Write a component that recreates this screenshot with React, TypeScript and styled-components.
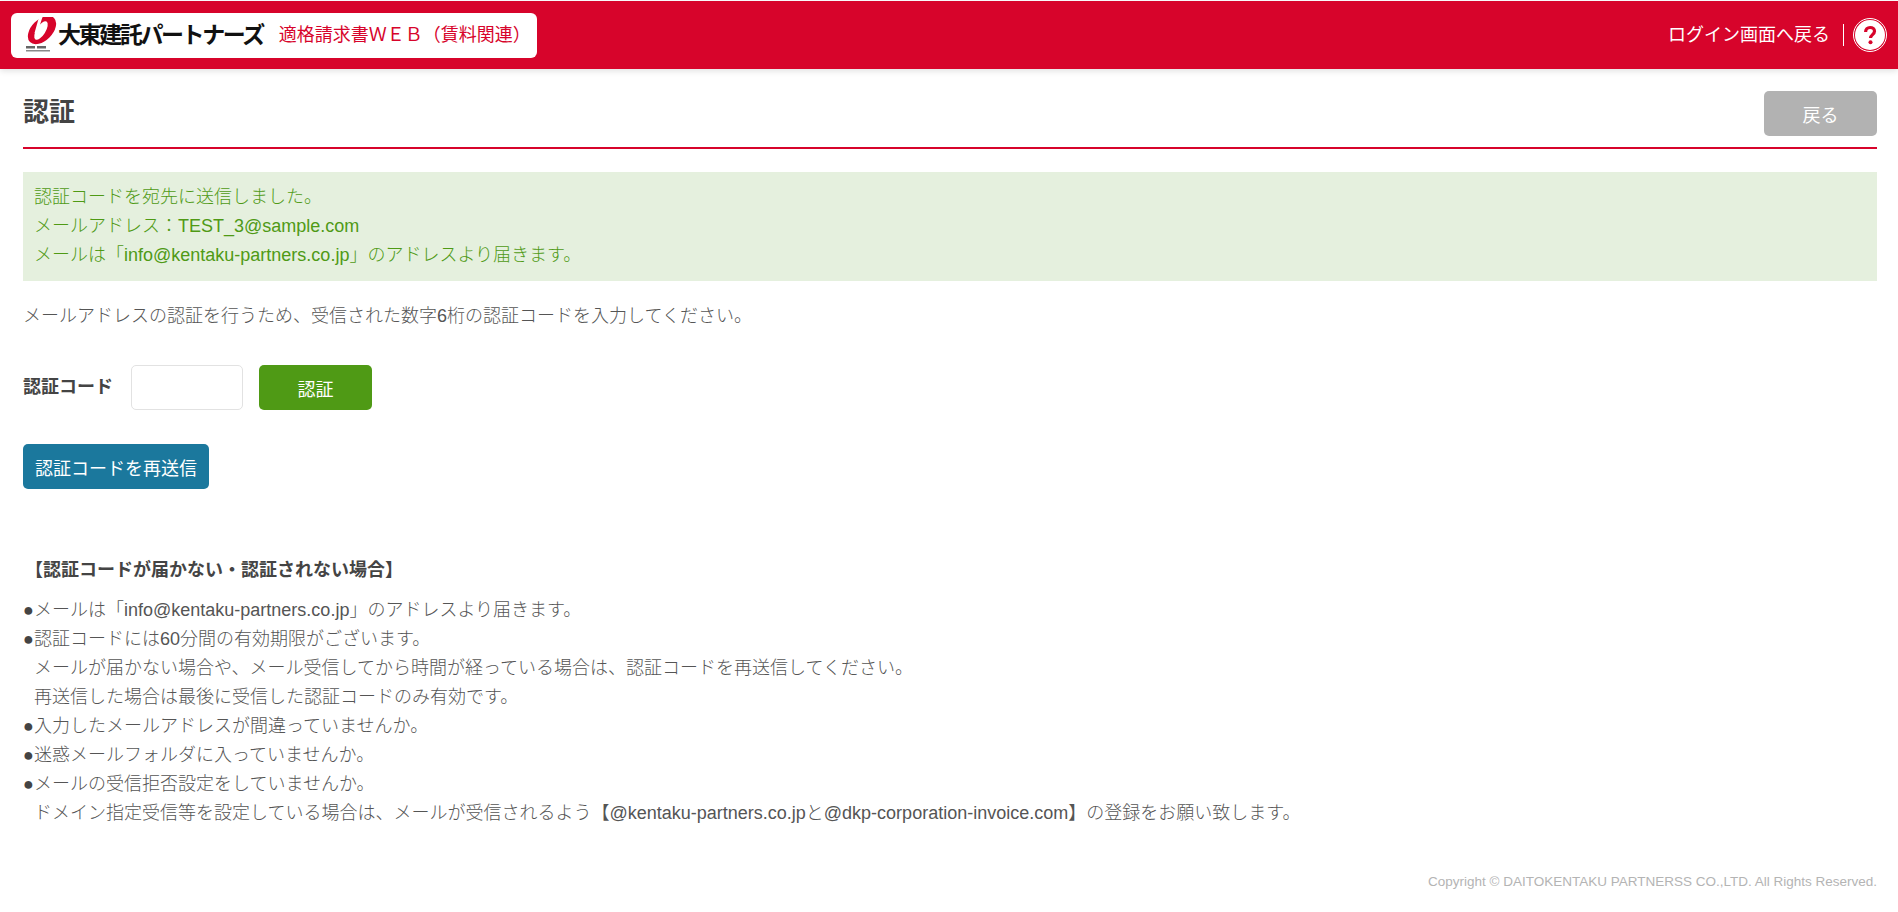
import React from "react"
import styled, { createGlobalStyle } from "styled-components"

const fontStack = `"Liberation Sans", "Noto Sans CJK JP", sans-serif`

const GlobalStyle = createGlobalStyle`
  html, body {
    margin: 0;
    padding: 0;
    background: #fff;
  }
  body {
    font-family: ${fontStack};
    font-size: 18px;
    font-weight: 300;
    line-height: 29px;
    color: #555;
  }
`

const Page = styled.div`
  min-height: 912px;
  display: flex;
  flex-direction: column;
  padding-top: 1px;
  box-sizing: border-box;
`

const Header = styled.header`
  height: 68px;
  background: #d7042b;
  box-shadow: 0 2px 6px rgba(0, 0, 0, 0.12);
  display: flex;
  align-items: center;
  justify-content: space-between;
  padding: 0 10px 0 11px;
`

const LogoBox = styled.div`
  width: 526px;
  height: 45px;
  box-sizing: border-box;
  background: #fff;
  border-radius: 6px;
  display: flex;
  align-items: center;
  padding-left: 14px;
`

const LogoName = styled.span`
  font-size: 23px;
  font-weight: 700;
  color: #111;
  letter-spacing: -2.4px;
  white-space: nowrap;
`

const SiteName = styled.span`
  font-size: 18px;
  font-weight: 400;
  color: #d7042b;
  white-space: nowrap;
  margin-left: 16px;
`

const HeaderNav = styled.nav`
  display: flex;
  align-items: center;
`

const BackLink = styled.a`
  color: #fff;
  font-size: 18px;
  font-weight: 400;
  white-space: nowrap;
`

const NavDivider = styled.span`
  width: 1px;
  height: 22px;
  background: #fff;
  margin: 0 8px 0 13px;
`

const Content = styled.main`
  flex: 1;
  padding: 0 21px 0 23px;
`

const TitleRow = styled.div`
  height: 67px;
  padding-top: 11px;
  border-bottom: 2px solid #d7042b;
  display: flex;
  align-items: center;
  justify-content: space-between;
`

const Title = styled.h1`
  margin: -3px 0 0;
  font-size: 26px;
  font-weight: 700;
  color: #444;
  line-height: 36px;
`

const Button = styled.button<{ $bg: string; $width?: number }>`
  height: 45px;
  width: ${(p) => (p.$width ? `${p.$width}px` : "auto")};
  padding: 0 12px;
  border: none;
  border-radius: 5px;
  background: ${(p) => p.$bg};
  color: #fff;
  font-family: ${fontStack};
  font-size: 18px;
  font-weight: 400;
  white-space: nowrap;
`

const Notice = styled.div`
  margin-top: 23px;
  padding: 11px 12px 11px 11px;
  background: #e5f0de;
  color: #4f9a15;
`

const Lead = styled.p`
  margin: 21px 0 0;
`

const CodeRow = styled.div`
  margin-top: 34px;
  display: flex;
  align-items: center;
`

const CodeLabel = styled.label`
  font-weight: 700;
  color: #444;
  width: 108px;
  white-space: nowrap;
`

const CodeInput = styled.input`
  width: 112px;
  height: 45px;
  box-sizing: border-box;
  border: 1px solid #e2e2e2;
  border-radius: 5px;
  margin-right: 16px;
`

const ResendRow = styled.div`
  margin-top: 34px;
`

const HelpTitle = styled.h2`
  margin: 67px 0 0 2px;
  font-size: 18px;
  font-weight: 700;
  color: #444;
  line-height: 29px;
`

const HelpList = styled.div`
  margin-top: 11px;
`

const HelpLine = styled.div<{ $bullet?: boolean }>`
  display: flex;
  padding-left: ${(p) => (p.$bullet ? 0 : "11px")};
`

const Bullet = styled.span`
  width: 11px;
  flex: none;
  color: #444;
`

const Footer = styled.footer`
  padding: 0 21px 20px 0;
  text-align: right;
  font-size: 13.500px;
  line-height: 20px;
  color: #b4b4b4;
`

const LogoMark = () => (
  <svg width="33" height="36" viewBox="0 0 33 36" aria-hidden="true">
    <ellipse cx="17" cy="13" rx="17" ry="10.500" transform="rotate(-45 17 13)" fill="#d7042b" />
    <ellipse cx="16" cy="13.500" rx="10.500" ry="4.500" transform="rotate(-58 16 13.500)" fill="#fff" />
    <path d="M14 0 L17.500 0 L12 17 L9.500 16 Z" fill="#fff" />
    <rect x="1" y="29" width="9" height="2.500" fill="#666" />
    <rect x="12" y="29" width="9" height="2.500" fill="#666" />
    <rect x="1" y="33" width="24" height="1.500" fill="#888" />
  </svg>
)

const HelpIcon = () => (
  <svg width="36" height="36" viewBox="0 0 36 36" role="img" aria-label="help">
    <circle cx="18" cy="18" r="16.500" fill="none" stroke="#fff" strokeWidth="1" />
    <circle cx="18" cy="18" r="15" fill="#fff" />
    <path
      d="M13.600 15c0-2.800 1.900-4.500 4.500-4.500s4.400 1.600 4.400 3.800c0 3.200-4 3.400-4 6.800"
      fill="none"
      stroke="#d7042b"
      strokeWidth="3.200"
    />
    <circle cx="18.500" cy="25.200" r="2" fill="#d7042b" />
  </svg>
)

export default function App() {
  return (
    <Page>
      <GlobalStyle />
      <Header>
        <LogoBox>
          <LogoMark />
          <LogoName>大東建託パートナーズ</LogoName>
          <SiteName>適格請求書ＷＥＢ（賃料関連）</SiteName>
        </LogoBox>
        <HeaderNav>
          <BackLink>ログイン画面へ戻る</BackLink>
          <NavDivider />
          <HelpIcon />
        </HeaderNav>
      </Header>

      <Content>
        <TitleRow>
          <Title>認証</Title>
          <Button $bg="#b2b2b2" $width={113}>
            戻る
          </Button>
        </TitleRow>

        <Notice>
          <div>認証コードを宛先に送信しました。</div>
          <div>メールアドレス：TEST_3@sample.com</div>
          <div>メールは「info@kentaku-partners.co.jp」のアドレスより届きます。</div>
        </Notice>

        <Lead>
          メールアドレスの認証を行うため、受信された数字6桁の認証コードを入力してください。
        </Lead>

        <CodeRow>
          <CodeLabel>認証コード</CodeLabel>
          <CodeInput type="text" />
          <Button $bg="#4f9a15" $width={113}>
            認証
          </Button>
        </CodeRow>

        <ResendRow>
          <Button $bg="#1b789d">認証コードを再送信</Button>
        </ResendRow>

        <HelpTitle>【認証コードが届かない・認証されない場合】</HelpTitle>
        <HelpList>
          <HelpLine $bullet>
            <Bullet>●</Bullet>メールは「info@kentaku-partners.co.jp」のアドレスより届きます。
          </HelpLine>
          <HelpLine $bullet>
            <Bullet>●</Bullet>認証コードには60分間の有効期限がございます。
          </HelpLine>
          <HelpLine>
            メールが届かない場合や、メール受信してから時間が経っている場合は、認証コードを再送信してください。
          </HelpLine>
          <HelpLine>再送信した場合は最後に受信した認証コードのみ有効です。</HelpLine>
          <HelpLine $bullet>
            <Bullet>●</Bullet>入力したメールアドレスが間違っていませんか。
          </HelpLine>
          <HelpLine $bullet>
            <Bullet>●</Bullet>迷惑メールフォルダに入っていませんか。
          </HelpLine>
          <HelpLine $bullet>
            <Bullet>●</Bullet>メールの受信拒否設定をしていませんか。
          </HelpLine>
          <HelpLine>
            ドメイン指定受信等を設定している場合は、メールが受信されるよう【@kentaku-partners.co.jpと@dkp-corporation-invoice.com】の登録をお願い致します。
          </HelpLine>
        </HelpList>
      </Content>

      <Footer>Copyright © DAITOKENTAKU PARTNERSS CO.,LTD. All Rights Reserved.</Footer>
    </Page>
  )
}
